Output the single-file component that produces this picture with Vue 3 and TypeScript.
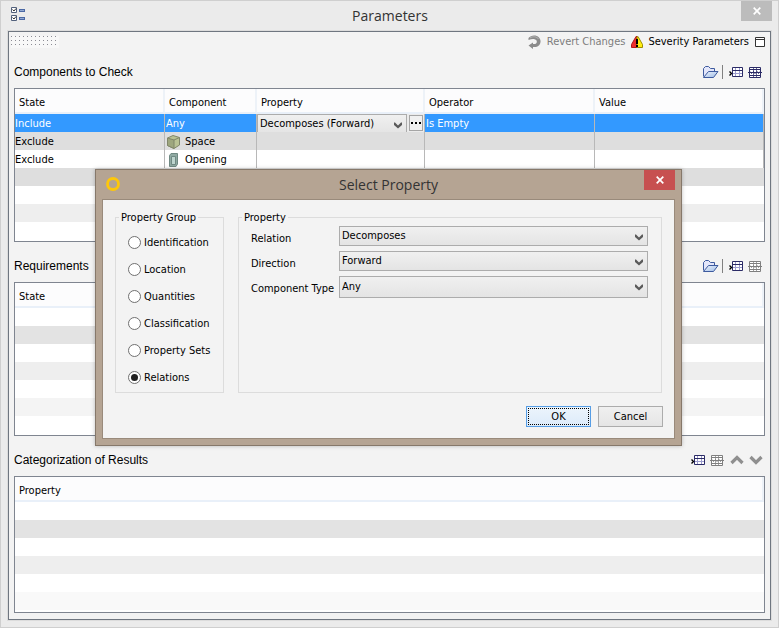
<script setup lang="ts">
import { ref } from 'vue'

interface Row {
  state: string
  component: string
  icon?: 'space' | 'opening'
  operator?: string
  selected?: boolean
}

const rows: Row[] = [
  { state: 'Include', component: 'Any', operator: 'Is Empty', selected: true },
  { state: 'Exclude', component: 'Space', icon: 'space' },
  { state: 'Exclude', component: 'Opening', icon: 'opening' },
]

const groups = ['Identification', 'Location', 'Quantities', 'Classification', 'Property Sets', 'Relations']
const group = ref('Relations')
const relation = ref('Decomposes')
const direction = ref('Forward')
const componentType = ref('Any')
const property = ref('Decomposes (Forward)')
</script>

<template>
  <div class="window">
    <svg class="defs" width="0" height="0" aria-hidden="true">
      <defs>
        <linearGradient id="folder-fill" x1="0" y1="0" x2="1" y2="1">
          <stop offset="0" stop-color="#f0f5fc" />
          <stop offset="1" stop-color="#9dbbe6" />
        </linearGradient>
      </defs>
      <symbol id="folder" viewBox="0 0 17 14">
        <path d="M1.5 11.5V3.5L3.5 1.5H6.5L8.5 3.5H12.5V6" fill="#e3e6fa" stroke="#3d5a9e" />
        <path d="M1.5 12.5L6.5 6.5H16L11.5 12.5Z" fill="url(#folder-fill)" stroke="#3d5a9e" />
      </symbol>
      <symbol id="add-row" viewBox="0 0 14 11">
        <path d="M3.5 .5H13.5V9.5H3.5Z" fill="#fff" />
        <path d="M6.5 1V9M10.5 1V9M4 6.5H13" fill="none" stroke="#9c9cce" />
        <path d="M3.5 .5H13.5V9.5H3.5ZM4 3.5H13" fill="none" stroke="#2b2b66" />
        <path d="M.5 4.5L2.5 6.5L.5 8.5" fill="none" stroke="#000" stroke-width="1.4" />
      </symbol>
      <symbol id="delete-row" viewBox="0 0 15 13">
        <path d="M1.5 1.5H12.5V11.5H1.5Z" fill="#fff" />
        <path d="M5.5 1V12M8.5 1V12" stroke="currentColor" opacity=".7" />
        <path d="M1.5 1.5H12.5V11.5H1.5ZM2 3.5H12M2 9.5H12" fill="none" stroke="currentColor" />
        <path d="M0 6.5H14" stroke="currentColor" />
        <path d="M2 5.5L3.5 7.5L5.5 5.5L7 7.5L9 5.5L10.5 7.5L12 5.5" fill="none" stroke="currentColor" />
      </symbol>
      <symbol id="drop" viewBox="0 0 8 7">
        <path d="M0 .5V3L4 6.5L8 3V.5H7L4 3.5L1 .5Z" fill="#5a5a5a" />
      </symbol>
      <symbol id="cross" viewBox="0 0 8 8">
        <path d="M.7 .7L7.3 7.3M7.3 .7L.7 7.3" stroke="#fff" stroke-width="1.7" />
      </symbol>
    </svg>

    <header class="titlebar">
      <svg class="app-icon" width="14" height="15" viewBox="0 0 14 15" aria-hidden="true">
        <path d="M.5 .5H5.5V5.5H.5ZM.5 8.5H5.5V13.5H.5Z" fill="#fff" stroke="#52617c" />
        <path d="M1.5 2.5L3 4L5 1.5M1.5 10.5L3 12L5 9.5" fill="none" stroke="#333" />
        <path d="M8 2H14V5H8ZM8 10H14V13H8Z" fill="#4b68a4" />
        <path d="M9 3.5H13M9 11.5H13" stroke="#93aad3" />
      </svg>
      <h1>Parameters</h1>
      <button class="close" type="button" aria-label="Close"><svg width="8" height="8"><use href="#cross" /></svg></button>
    </header>

    <main class="panel">
      <div class="toolbar">
        <span class="grip"></span>
        <button class="tool muted" type="button">
          <svg width="14" height="14" viewBox="0 0 14 14" aria-hidden="true">
            <path d="M.5 3C3 0 8 -.5 11 2.5C14 6 12.5 11 8 12L5 12V14L.5 10.5L5 7.5V9C8 9.5 9.5 7.5 8.5 5.5C7 3.5 4 3.5 .5 5Z" fill="#8b8b8b" />
            <path d="M2 3C5 1 9 1.500 10.500 4" fill="none" stroke="#b5b5b5" />
          </svg>
          Revert Changes
        </button>
        <button class="tool" type="button">
          <svg width="12" height="12" viewBox="0 0 12 12" aria-hidden="true">
            <path d="M5 .5L.5 8.500V11.500H6V.5Z" fill="#ee2c2c" stroke="#b01818" />
            <path d="M6 1L7 .5L11.500 8.500V11.500H6Z" fill="#ffee10" stroke="#9c8d00" />
            <path d="M5 3H7V8H5ZM5 9H7V11H5Z" fill="#000" />
          </svg>
          Severity Parameters
        </button>
        <button class="icon" type="button" aria-label="Maximize">
          <svg width="10" height="10" viewBox="0 0 10 10"><path d="M.5 .5H9.5V9.5H.5ZM.5 2.5H9.5" fill="#fff" stroke="#333" /></svg>
        </button>
      </div>

      <section>
        <div class="head first">
          <h2>Components to Check</h2>
          <div class="actions">
            <button class="icon" type="button" aria-label="Open"><svg width="17" height="14"><use href="#folder" /></svg></button>
            <span class="rule"></span>
            <button class="icon" type="button" aria-label="Add row"><svg width="14" height="11"><use href="#add-row" /></svg></button>
            <button class="icon" type="button" aria-label="Delete row"><svg width="15" height="13"><use href="#delete-row" /></svg></button>
          </div>
        </div>
        <div class="grid">
          <table>
            <colgroup>
              <col class="c-state" /><col class="c-component" /><col class="c-property" /><col class="c-operator" /><col />
            </colgroup>
            <thead>
              <tr><th>State</th><th>Component</th><th>Property</th><th>Operator</th><th>Value</th></tr>
            </thead>
            <tbody>
              <tr v-for="row in rows" :key="row.component" :class="{ selected: row.selected }">
                <td>{{ row.state }}</td>
                <td>
                  <span v-if="row.icon" class="named">
                    <svg v-if="row.icon === 'space'" width="13" height="14" viewBox="0 0 13 14" aria-hidden="true">
                      <path d="M.5 3L6 .5L12.5 2.5V10L7 13.5L.5 10.5Z" fill="#b9c294" stroke="#80866a" />
                      <path d="M.5 3L7 5V13.5L.5 10.5Z" fill="#9ea77e" stroke="#80866a" />
                      <path d="M7 5L12.5 2.5" stroke="#80866a" />
                    </svg>
                    <svg v-else width="13" height="14" viewBox="0 0 13 14" aria-hidden="true">
                      <path d="M2.5 2.5L4 .5H10.5V11L9 13.5H2.5Z" fill="#8fa9a2" stroke="#6f8983" />
                      <path d="M4.5 3.5H8.5V11.5H4.5Z" fill="#bdd4ce" stroke="#6f8983" />
                    </svg>
                    {{ row.component }}
                  </span>
                  <template v-else>{{ row.component }}</template>
                </td>
                <td :class="{ editing: row.selected }">
                  <div v-if="row.selected" class="editor">
                    <span class="combo">
                      <select v-model="property" aria-label="Property"><option>Decomposes (Forward)</option></select>
                      <svg width="8" height="7" aria-hidden="true"><use href="#drop" /></svg>
                    </span>
                    <button class="more" type="button" aria-label="Browse">
                      <svg width="10" height="2" viewBox="0 0 10 2"><path d="M0 0H2V2H0ZM4 0H6V2H4ZM8 0H10V2H8Z" /></svg>
                    </button>
                  </div>
                </td>
                <td>{{ row.operator }}</td>
                <td></td>
              </tr>
            </tbody>
          </table>
          <div class="stripes"><i class="s1"></i><i></i><i class="s3"></i><i></i></div>
        </div>
      </section>

      <section>
        <div class="head">
          <h2>Requirements</h2>
          <div class="actions">
            <button class="icon" type="button" aria-label="Open"><svg width="17" height="14"><use href="#folder" /></svg></button>
            <span class="rule"></span>
            <button class="icon" type="button" aria-label="Add row"><svg width="14" height="11"><use href="#add-row" /></svg></button>
            <button class="icon off" type="button" aria-label="Delete row" disabled><svg width="15" height="13"><use href="#delete-row" /></svg></button>
          </div>
        </div>
        <div class="grid">
          <table><thead><tr><th>State</th></tr></thead></table>
          <div class="stripes"><i></i><i class="s2"></i><i></i><i class="s3"></i><i></i><i class="s4"></i><i></i></div>
        </div>
      </section>

      <section class="fill">
        <div class="head">
          <h2>Categorization of Results</h2>
          <div class="actions">
            <button class="icon" type="button" aria-label="Add row"><svg width="14" height="11"><use href="#add-row" /></svg></button>
            <button class="icon off" type="button" aria-label="Delete row" disabled><svg width="15" height="13"><use href="#delete-row" /></svg></button>
            <button class="icon" type="button" aria-label="Move up" disabled>
              <svg width="14" height="10" viewBox="0 0 14 10"><path d="M1.5 8L7 2.5L12.5 8" fill="none" stroke="#8f8f8f" stroke-width="3.2" /></svg>
            </button>
            <button class="icon" type="button" aria-label="Move down" disabled>
              <svg width="14" height="10" viewBox="0 0 14 10"><path d="M1.5 2L7 7.5L12.5 2" fill="none" stroke="#8f8f8f" stroke-width="3.2" /></svg>
            </button>
          </div>
        </div>
        <div class="grid">
          <table><thead><tr><th>Property</th></tr></thead></table>
          <div class="stripes"><i></i><i class="s2"></i><i></i><i class="s3"></i><i></i><i class="s5"></i></div>
        </div>
      </section>
    </main>

    <div class="dialog" role="dialog" aria-labelledby="dialog-title">
      <header class="dialog-title">
        <svg class="ring" width="14" height="14" viewBox="0 0 14 14" aria-hidden="true"><circle cx="7" cy="7" r="5.5" fill="none" stroke="#fec70a" stroke-width="2.8" /></svg>
        <h2 id="dialog-title">Select Property</h2>
        <button class="close red" type="button" aria-label="Close"><svg width="8" height="8"><use href="#cross" /></svg></button>
      </header>
      <form class="dialog-body" @submit.prevent>
        <div class="groups">
          <fieldset class="radios">
            <legend>Property Group</legend>
            <label v-for="name in groups" :key="name">
              <input v-model="group" type="radio" name="group" :value="name" />{{ name }}
            </label>
          </fieldset>
          <fieldset class="fields">
            <legend>Property</legend>
            <label for="relation">Relation</label>
            <span class="combo">
              <select id="relation" v-model="relation"><option>Decomposes</option></select>
              <svg width="8" height="7" aria-hidden="true"><use href="#drop" /></svg>
            </span>
            <label for="direction">Direction</label>
            <span class="combo">
              <select id="direction" v-model="direction"><option>Forward</option></select>
              <svg width="8" height="7" aria-hidden="true"><use href="#drop" /></svg>
            </span>
            <label for="component-type">Component Type</label>
            <span class="combo tall">
              <select id="component-type" v-model="componentType"><option>Any</option></select>
              <svg width="8" height="7" aria-hidden="true"><use href="#drop" /></svg>
            </span>
          </fieldset>
        </div>
        <div class="buttons">
          <button class="push default" type="submit"><span>OK</span></button>
          <button class="push" type="button"><span>Cancel</span></button>
        </div>
      </form>
    </div>
  </div>
</template>

<style>
body {
  margin: 0;
}
</style>

<style scoped>
* {
  box-sizing: border-box;
}
.window {
  position: relative;
  display: flex;
  flex-direction: column;
  min-height: 100vh;
  padding: 0 7px 7px;
  border: 1px solid #cfcfcf;
  background: #ebebeb;
  color: #000;
  font: 11px/14px "DejaVu Sans Condensed", "DejaVu Sans", sans-serif;
}
.defs {
  position: absolute;
}
h1,
h2 {
  margin: 0;
  font-weight: 400;
}
svg {
  display: block;
  flex: none;
}
button {
  margin: 0;
  padding: 0;
  border: 0;
  background: none;
  color: inherit;
  font: inherit;
}
.titlebar {
  display: grid;
  grid-template-columns: 31px 1fr 31px;
  align-items: start;
  height: 30px;
  margin-right: -1px;
}
.app-icon {
  margin: 6px 0 0 3px;
}
.titlebar h1,
.dialog-title h2 {
  color: #333;
  font: 14px/30px "Open Sans", sans-serif;
  text-align: center;
}
.close {
  display: grid;
  place-items: center;
  width: 31px;
  height: 20px;
  background: #bcbcbc;
}
.close.red {
  background: #c75050;
}
.panel {
  display: flex;
  flex: 1;
  flex-direction: column;
  padding: 0 5px 6px;
  border: 1px solid #6f7680;
  background: #f3f3f3;
  box-shadow: 0 0 0 1px #dcdcdc;
}
.toolbar {
  display: flex;
  align-items: center;
  height: 20px;
}
.grip {
  width: 48px;
  height: 12px;
  margin: 0 auto 0 -3px;
  background: conic-gradient(from 0deg at 1px 1px, transparent 75%, #8c8c94 0) 0 0 / 4px 4px #f8f8f8;
}
.tool {
  display: flex;
  align-items: center;
  gap: 5px;
  margin-right: 6px;
}
.tool.muted {
  color: #7d7d7d;
}
.icon {
  display: block;
}
.head {
  display: flex;
  align-items: center;
  justify-content: space-between;
  height: 40px;
  padding-top: 8px;
}
.head.first {
  height: 36px;
  padding-top: 4px;
}
.head h2 {
  font: 12px/16px "Liberation Sans", sans-serif;
}
.actions {
  display: flex;
  align-items: center;
  gap: 5px;
  padding-right: 2px;
  color: #2b2b66;
}
.rule {
  width: 1px;
  height: 14px;
  margin: 0 1px 0 -2px;
  background: #808080;
}
.off {
  color: #7f7f7f;
}
.grid {
  border: 1px solid #7f8590;
  background: #fff;
}
.fill {
  display: flex;
  flex: 1;
  flex-direction: column;
}
.fill .grid {
  flex: 1;
}
table {
  width: 100%;
  border-collapse: separate;
  border-spacing: 0;
  table-layout: fixed;
}
.c-state {
  width: 150px;
}
.c-component {
  width: 92px;
}
.c-property {
  width: 168px;
}
.c-operator {
  width: 170px;
}
th {
  height: 25px;
  padding: 4px 4px 0;
  border-right: 2px solid #edf2f8;
  border-bottom: 2px solid #e9f0f9;
  background: #fcfcfd;
  font-weight: 400;
  text-align: left;
}
td {
  height: 18px;
  padding: 2px 0 0 1px;
  border-right: 1px solid #b8b8b8;
  line-height: 16px;
}
td:first-child {
  padding-left: 0;
}
td.editing {
  padding: 0;
}
tbody tr:nth-child(2) {
  background: #dedede;
}
tr.selected {
  background: #39f;
  color: #fff;
}
.named {
  display: flex;
  align-items: center;
  gap: 5px;
  height: 16px;
  padding-left: 1px;
}
.stripes {
  display: grid;
  grid-auto-rows: 18px;
  padding-bottom: 1px;
}
.s1 {
  background: #dedede;
}
.s2 {
  background: #e3e3e3;
}
.s3 {
  background: #eee;
}
.s4 {
  background: #f4f4f4;
}
.s5 {
  background: #f9f9f9;
}
.combo {
  position: relative;
  display: block;
  height: 20px;
}
.combo.tall {
  height: 22px;
}
.combo select {
  display: block;
  width: 100%;
  height: 100%;
  margin: 0;
  padding: 0 20px 0 2px;
  border: 1px solid #acacac;
  border-radius: 0;
  outline: 0;
  appearance: none;
  background: linear-gradient(#f0f0f0, #e4e4e4);
  color: #000;
  font: inherit;
}
.combo svg {
  position: absolute;
  top: 8px;
  right: 5px;
  pointer-events: none;
}
.editor {
  display: flex;
  gap: 2px;
  height: 18px;
  padding-right: 1px;
  overflow: hidden;
  background: #ebebeb;
}
.editor .combo {
  flex: 1;
}
.more {
  display: grid;
  place-items: center;
  width: 14px;
  height: 16px;
  margin-top: 1px;
  border: 1px solid #a5a5a5;
  background: #f0f0f0;
}
.dialog {
  position: absolute;
  top: 168px;
  left: 94px;
  width: 587px;
  padding: 0 6px 6px;
  border: 1px solid #86786a;
  background: #b5a493;
  box-shadow: 0 0 4px rgba(0, 0, 0, 0.25);
}
.dialog-title {
  display: grid;
  grid-template-columns: 31px 1fr 31px;
  align-items: start;
  height: 29px;
}
.ring {
  margin: 7px 0 0 4px;
}
.dialog-body {
  padding: 9px 12px 11px;
  border: 1px solid #998a7b;
  background: #f3f3f3;
}
.groups {
  display: grid;
  grid-template-columns: 109px 1fr;
  gap: 14px;
}
fieldset {
  min-width: 0;
  margin: 0;
  border: 1px solid #dcdcdc;
}
legend {
  padding: 2px 2px 0;
}
.radios {
  padding: 4px 0 1px 12px;
}
.radios legend {
  margin-left: -9px;
}
.radios label {
  display: flex;
  align-items: center;
  gap: 3px;
  height: 27px;
  white-space: nowrap;
}
.radios input {
  display: grid;
  place-items: center;
  width: 13px;
  height: 13px;
  margin: 0;
  border: 1px solid #707070;
  border-radius: 50%;
  appearance: none;
  background: #fff;
}
.radios input:checked::before {
  width: 7px;
  height: 7px;
  border-radius: 50%;
  background: #212121;
  content: "";
}
.fields {
  display: grid;
  grid-template-columns: 83px 1fr;
  align-content: start;
  gap: 5px;
  padding: 1px 13px 0 12px;
}
.fields legend {
  margin-left: -9px;
}
.fields label {
  padding-top: 6px;
  white-space: nowrap;
}
.buttons {
  display: flex;
  justify-content: flex-end;
  gap: 7px;
  margin-top: 13px;
  margin-right: -1px;
}
.push {
  width: 65px;
  height: 21px;
  padding: 1px;
  border: 1px solid #acacac;
  background: linear-gradient(#f0f0f0, #e5e5e5);
}
.push span {
  display: block;
  border: 1px solid transparent;
  line-height: 15px;
}
.push.default {
  border-color: #569de5;
  background: linear-gradient(#ecf4fc, #dcebfa);
}
.push.default span {
  border: 1px dotted #000;
}
</style>
